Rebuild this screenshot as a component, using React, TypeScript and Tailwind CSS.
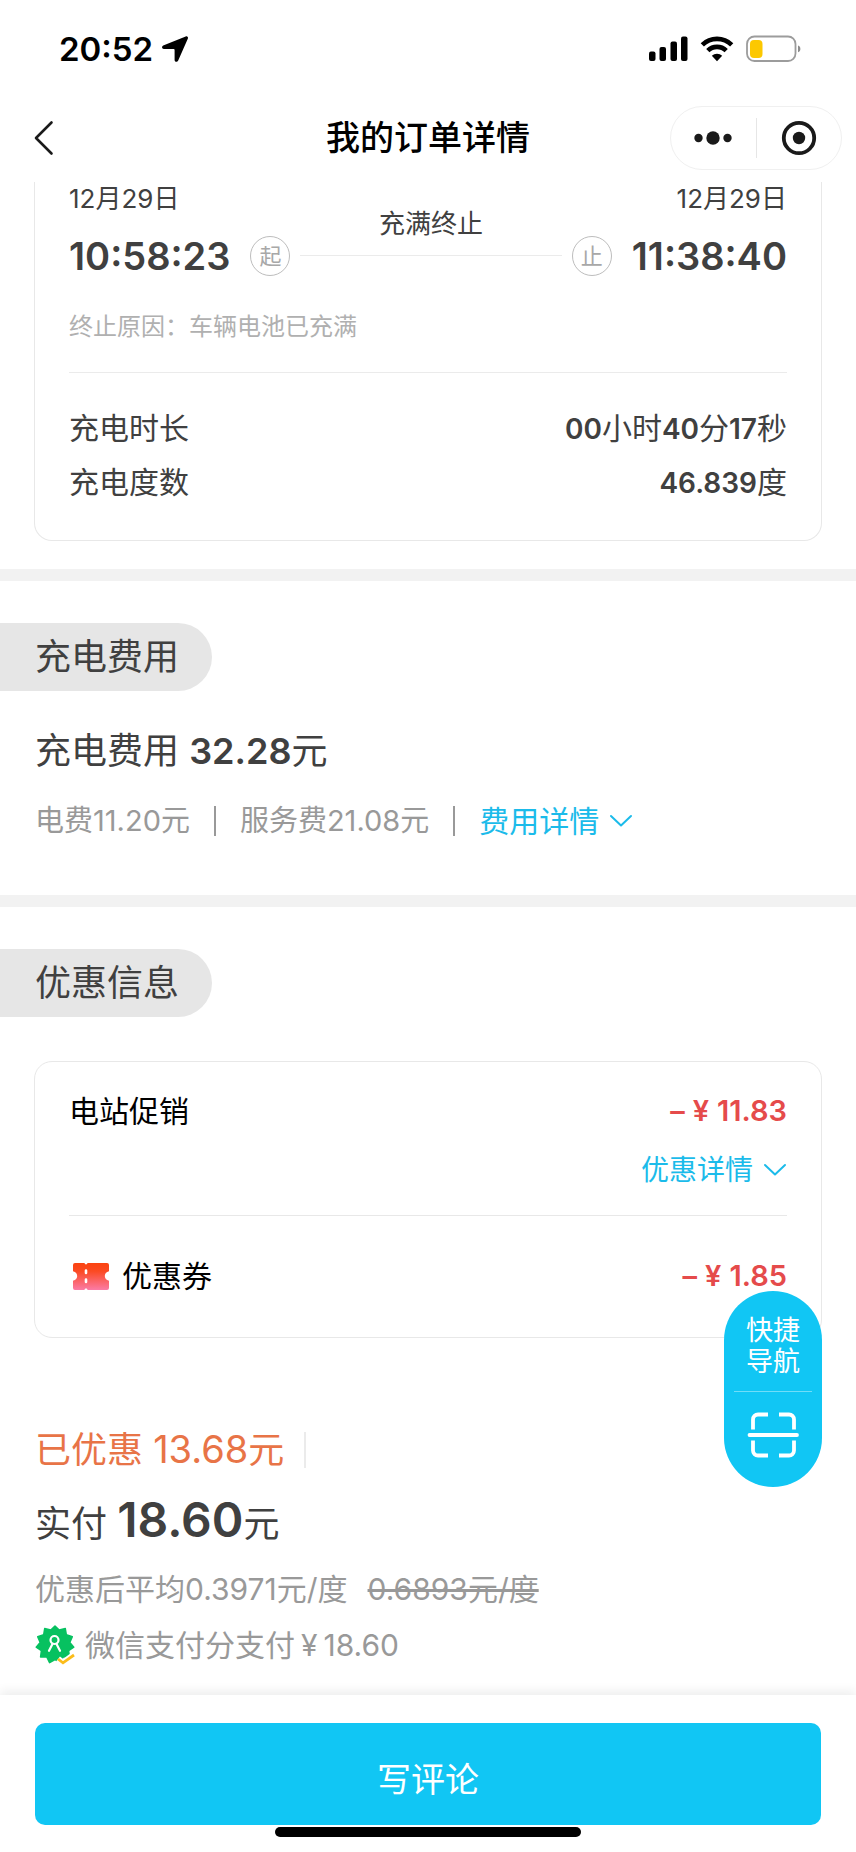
import React, { useState } from 'react';

interface Amount {
  value: string;
}

function Chevron() {
  return (
    <svg width="24" height="14" viewBox="0 0 24 14" fill="none" stroke="currentColor" strokeWidth="2" strokeLinecap="round" strokeLinejoin="round" aria-hidden="true">
      <path d="M2 2l10 9.5L22 2" />
    </svg>
  );
}

function StatusBar() {
  return (
    <div className="flex h-[98px] items-center justify-between pl-[59px] pr-[54px] text-black">
      <div className="flex items-center gap-2">
        <span className="text-[33px] leading-10 font-semibold">20:52</span>
        <svg width="28" height="28" viewBox="0 0 28 28" fill="currentColor" aria-hidden="true">
          <path d="M24.700 1.400 2.200 10.600C.4 11.500.8 14 2.800 14h9.900c.6 0 .9.3.9.9v10c0 2.200 2.700 2.500 3.600.5L26.900 3.400c.5-1.500-.8-2.600-2.200-2z" />
        </svg>
      </div>
      <div className="flex items-center gap-3">
        <svg width="40" height="26" viewBox="0 0 40 26" fill="currentColor" aria-hidden="true">
          <rect x="1" y="15.500" width="6.500" height="9.500" rx="2" />
          <rect x="11.500" y="11" width="6.500" height="14" rx="2" />
          <rect x="22.500" y="5.500" width="6.500" height="19.500" rx="2" />
          <rect x="33" y="0.500" width="6.500" height="24.500" rx="2" />
        </svg>
        <svg width="34" height="26" viewBox="0 0 34 26" aria-hidden="true">
          <g fill="none" stroke="currentColor" strokeWidth="4.600">
            <path d="M2.300 8.900a21 21 0 0 1 29.400 0" />
            <path d="M7.800 14.700a13 13 0 0 1 18.400 0" />
          </g>
          <path d="M17 25.200l-5.200-5.400a7.400 7.400 0 0 1 10.400 0z" fill="currentColor" />
        </svg>
        <svg width="56" height="28" viewBox="0 0 56 28" aria-hidden="true">
          <rect x="1" y="1.500" width="48.500" height="24.500" rx="7.500" fill="none" stroke="#9c9c9c" strokeWidth="1.800" />
          <rect x="4" y="5" width="12.500" height="18" rx="4" fill="#fcc800" />
          <path d="M52 10.500c3.200 1 3.200 5.800 0 6.800z" fill="#8c8c8c" />
        </svg>
      </div>
    </div>
  );
}

function NavBar() {
  return (
    <header className="grid h-[84px] grid-cols-[1fr_auto_1fr] items-center px-[14px] pb-1">
      <button type="button" aria-label="返回" className="justify-self-start pl-[18px]">
        <svg width="24" height="36" viewBox="0 0 24 36" fill="none" stroke="#1a1a1a" strokeWidth="2.600" strokeLinecap="round" strokeLinejoin="round">
          <path d="M19.500 2.500L4 18l15.500 15.500" />
        </svg>
      </button>
      <h1 className="text-[34px] leading-[50px] font-medium text-black">我的订单详情</h1>
      <div className="flex h-16 w-[172px] items-center justify-self-end rounded-full border border-[#f0f0f0] bg-white">
        <button type="button" aria-label="更多" className="flex flex-1 justify-center">
          <svg width="38" height="14" viewBox="0 0 38 14" fill="#1a1a1a">
            <circle cx="4.500" cy="7" r="4.200" />
            <circle cx="19" cy="7" r="6.700" />
            <circle cx="33.500" cy="7" r="4.200" />
          </svg>
        </button>
        <span className="h-10 w-px bg-[#e6e6e6]" />
        <button type="button" aria-label="关闭" className="flex flex-1 justify-center">
          <svg width="36" height="36" viewBox="0 0 36 36">
            <circle cx="18" cy="18" r="15.200" fill="none" stroke="#1a1a1a" strokeWidth="3.800" />
            <circle cx="18" cy="18" r="6.200" fill="#1a1a1a" />
          </svg>
        </button>
      </div>
    </header>
  );
}

function PointBadge({ children }: { children: React.ReactNode }) {
  return (
    <span className="flex h-11 items-center">
      <span className="flex size-10 items-center justify-center rounded-full border border-[#bdbdbd] text-[22px] leading-8 text-[#a8a8a8]">
        {children}
      </span>
    </span>
  );
}

function SectionTitle({ children }: { children: React.ReactNode }) {
  return (
    <h2 className="flex h-[68px] w-[212px] items-center rounded-r-full bg-[#e6e6e6] pl-[35px] text-[36px] leading-[50px]">
      {children}
    </h2>
  );
}

function Strong({ children }: { children: React.ReactNode }) {
  return <b className="text-[28px] leading-none font-semibold">{children}</b>;
}

function Discount({ value }: Amount) {
  return (
    <span className="flex gap-2 text-[29px] leading-[54px] font-semibold text-[#e54b4b]">
      <span>–</span>
      <span>¥</span>
      <span>{value}</span>
    </span>
  );
}

function CouponIcon() {
  return (
    <svg width="38" height="30" viewBox="0 0 38 30" aria-hidden="true">
      <defs>
        <linearGradient id="coupon" x1="0" y1="0" x2="0" y2="1">
          <stop offset="0" stopColor="#fb4310" />
          <stop offset="0.300" stopColor="#fb4a22" />
          <stop offset="1" stopColor="#fb7ba6" />
        </linearGradient>
      </defs>
      <path
        d="M3 2h9.500c.200 1.900 2.800 1.900 3 0H35a2 2 0 0 1 2 2v6.300c-5.600.900-5.600 8.500 0 9.400V27a2 2 0 0 1-2 2H15.500c-.200-1.900-2.800-1.900-3 0H3a2 2 0 0 1-2-2v-7.300c5.600-.900 5.600-8.500 0-9.400V4a2 2 0 0 1 2-2z"
        fill="url(#coupon)"
      />
      <path d="M14 9.500v2.500M14 18.500v2.500" stroke="#fff" strokeWidth="2.600" strokeLinecap="round" />
    </svg>
  );
}

function PayScoreIcon() {
  return (
    <svg width="40" height="42" viewBox="0 0 40 42" aria-hidden="true">
      <path
        d="M20 2l4.200 4.100 6.100-1.600 1 6.200 6 1.900-2.500 5.800 4 4.800-5.200 3.500.800 6.200-6.300.200-2.700 5.600L20 35.500l-5.400 3.200-2.700-5.600-6.300-.200.800-6.200-5.200-3.500 4-4.800-2.500-5.800 6-1.900 1-6.200 6.100 1.600z"
        fill="#07c160"
        stroke="#07c160"
        strokeWidth="1.500"
        strokeLinejoin="round"
      />
      <g fill="none" stroke="#fff" strokeWidth="2.200" strokeLinecap="round">
        <circle cx="19.500" cy="16" r="4" />
        <path d="M17.600 19.800l-3.600 7M21.400 19.800l3.600 7" />
      </g>
      <path d="M23 35l5 3.800L39 31" fill="none" stroke="#fff" strokeWidth="6.500" />
      <path d="M23 35l5 3.800L39 31" fill="none" stroke="#fbbc1a" strokeWidth="2.800" />
    </svg>
  );
}

function QuickNav() {
  return (
    <nav className="fixed right-[34px] bottom-[365px] flex h-[196px] w-[98px] flex-col items-center rounded-full bg-[#11c6f4] px-[10px] text-white">
      <a href="#nav" className="flex h-[101px] items-end border-b border-white/40 px-3 pb-[14px] text-center text-[27px] leading-[31px]">
        <span>快捷<br />导航</span>
      </a>
      <button type="button" aria-label="扫码" className="mt-[19px]">
        <svg width="52" height="48" viewBox="0 0 52 48" fill="none" stroke="#fff" strokeWidth="3.800">
          <path d="M6 18.500V8.500a5 5 0 0 1 5-5h10M32 3.500h10a5 5 0 0 1 5 5v10M6 29.500v10a5 5 0 0 0 5 5h10M32 44.500h10a5 5 0 0 0 5-5v-10" />
          <path d="M2.500 24h47.500" strokeLinecap="round" />
        </svg>
      </button>
    </nav>
  );
}

export default function App() {
  const [showFee, setShowFee] = useState(false);
  const [showDiscount, setShowDiscount] = useState(false);

  return (
    <div className="bg-white font-['Inter','Noto_Sans_CJK_SC',sans-serif] text-[#404040]">
      <StatusBar />
      <NavBar />

      <main>
        <section className="pb-7">
          <div className="mx-[34px] rounded-b-[18px] border border-t-0 border-[#e8e8e8] px-[34px] pb-[31px]">
            <div className="flex items-end">
              <div>
                <p className="text-[26px] leading-[34px]">12月29日</p>
                <p className="mt-[18px] text-[38px] leading-[44px] font-semibold">10:58:23</p>
              </div>
              <div className="mx-5 flex flex-1 items-end gap-[10px]">
                <PointBadge>起</PointBadge>
                <div className="flex-1 pb-[22px] text-center">
                  <p className="mb-[14px] text-[26px] leading-[34px]">充满终止</p>
                  <div className="h-px bg-[#ebebeb]" />
                </div>
                <PointBadge>止</PointBadge>
              </div>
              <div className="text-right">
                <p className="text-[26px] leading-[34px]">12月29日</p>
                <p className="mt-[18px] text-[38px] leading-[44px] font-semibold">11:38:40</p>
              </div>
            </div>
            <p className="mt-8 text-[24px] leading-[34px] text-[#b0b0b0]">终止原因：车辆电池已充满</p>
            <dl className="mt-7 border-t border-[#ebebeb] pt-7 text-[30px] leading-[54px]">
              <div className="flex justify-between">
                <dt>充电时长</dt>
                <dd><Strong>00</Strong>小时<Strong>40</Strong>分<Strong>17</Strong>秒</dd>
              </div>
              <div className="flex justify-between">
                <dt>充电度数</dt>
                <dd><Strong>46.839</Strong>度</dd>
              </div>
            </dl>
          </div>
        </section>

        <section className="border-t-[12px] border-[#f2f2f2] pt-[42px] pb-[54px]">
          <SectionTitle>充电费用</SectionTitle>
          <p className="mt-[35px] px-[35px] text-[36px] leading-[50px]">
            充电费用 <b className="font-semibold">32.28</b>元
          </p>
          <div className="mt-[25px] flex items-center gap-6 px-[35px] text-[29px] leading-10 text-[#999]">
            <span>电费11.20元</span>
            <span className="h-[30px] w-0.5 bg-[#999]" />
            <span>服务费21.08元</span>
            <span className="h-[30px] w-0.5 bg-[#999]" />
            <button
              type="button"
              aria-expanded={showFee}
              onClick={() => setShowFee(!showFee)}
              className="flex items-center gap-[10px] text-[30px] text-[#1bbbea]"
            >
              费用详情
              <Chevron />
            </button>
          </div>
        </section>

        <section className="border-t-[12px] border-[#f2f2f2] pt-[42px] pb-[30px]">
          <SectionTitle>优惠信息</SectionTitle>
          <div className="mx-[34px] mt-11 rounded-[18px] border border-[#e8e8e8] px-[34px] pt-[22px] pb-[34px] text-[30px] leading-[54px] text-black">
            <div className="flex justify-between">
              <span>电站促销</span>
              <Discount value="11.83" />
            </div>
            <button
              type="button"
              aria-expanded={showDiscount}
              onClick={() => setShowDiscount(!showDiscount)}
              className="mt-3 ml-auto flex items-center gap-[10px] text-[28px] leading-10 text-[#1bbbea]"
            >
              优惠详情
              <Chevron />
            </button>
            <div className="mt-[25px] flex justify-between border-t border-[#e8e8e8] pt-[33px]">
              <span className="flex items-center gap-3 pl-[3px]">
                <CouponIcon />
                优惠券
              </span>
              <Discount value="1.85" />
            </div>
          </div>

          <div className="mt-[87px] px-[35px]">
            <p className="flex items-center gap-5 text-[36px] leading-[50px] text-[#e87447]">
              <span>已优惠 <span className="text-[38px] leading-none">13.68</span>元</span>
              <span className="h-9 w-0.5 bg-[#ebebeb]" />
            </p>
            <p className="mt-[19px] text-[36px] leading-[60px]">
              实付 <b className="text-[48px] leading-none font-semibold">18.60</b>元
            </p>
            <p className="mt-[15px] flex gap-5 text-[30px] leading-10 text-[#999]">
              <span>优惠后平均0.3971元/度</span>
              <del>0.6893元/度</del>
            </p>
            <div className="mt-4 flex h-10 items-center gap-[10px] text-[30px] leading-10 text-[#999]">
              <PayScoreIcon />
              <p className="flex gap-1.5">
                <span>微信支付分支付</span>
                <span>¥</span>
                <span>18.60</span>
              </p>
            </div>
          </div>
        </section>
      </main>

      <QuickNav />

      <footer className="bg-white px-[35px] pt-7 pb-4 shadow-[0_-4px_10px_rgba(0,0,0,0.07)]">
        <button type="button" className="h-[102px] w-full rounded-[10px] bg-[#11c6f4] pt-3 text-[34px] leading-[50px] text-white">
          写评论
        </button>
        <div className="mx-auto mt-0.5 h-[10px] w-[306px] rounded-full bg-black" />
      </footer>
    </div>
  );
}
